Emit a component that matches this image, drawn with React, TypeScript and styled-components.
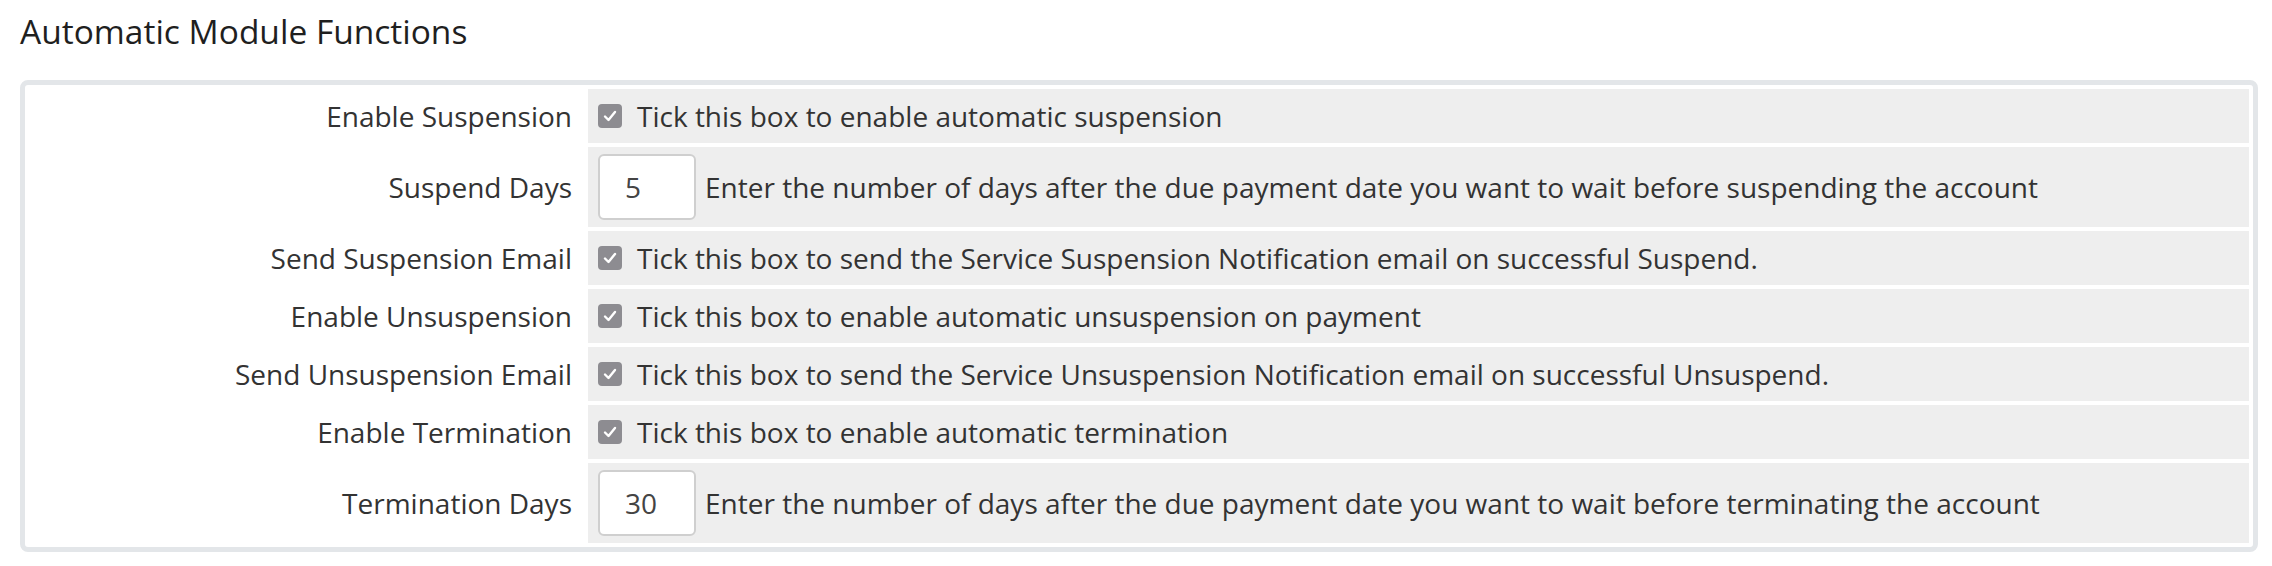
import React from 'react';
import styled, { createGlobalStyle } from 'styled-components';

const GlobalStyle = createGlobalStyle`
  html, body {
    margin: 0;
    padding: 0;
    background: #ffffff;
    font-family: "Open Sans", "Liberation Sans", Arial, sans-serif;
  }
`

const Page = styled.div`
  padding: 0 14px 0 20px;
`

const Title = styled.h2`
  margin: 0;
  padding: 8px 0 0 0;
  height: 80px;
  box-sizing: border-box;
  font-size: 33.5px;
  font-weight: 400;
  line-height: 46px;
  color: #1f1f1f;
`

const Panel = styled.div`
  border: 5px solid #e3e6e9;
  border-radius: 8px;
  padding: 4px;
  display: grid;
  grid-template-columns: 25% 1fr;
  row-gap: 4.5px;
  column-gap: 4px;
`

const Label = styled.div`
  display: flex;
  align-items: center;
  justify-content: flex-end;
  padding-right: 12px;
  font-size: 28px;
  color: #333333;
  white-space: nowrap;
`

const Field = styled.div<{ $tall?: boolean }>`
  display: flex;
  align-items: center;
  background: #eeeeee;
  height: ${p => (p.$tall ? '79.5px' : '53.5px')};
  padding-left: 10px;
  font-size: 28px;
  color: #333333;
  white-space: nowrap;
`

const Check = styled.span`
  display: inline-flex;
  align-items: center;
  justify-content: center;
  width: 24px;
  height: 24px;
  border-radius: 4px;
  background: #8d8c91;
  margin: 1px 15px 0 0;
  flex-shrink: 0;
`

const NumberInput = styled.input`
  width: 98px;
  height: 66px;
  box-sizing: border-box;
  border: 2px solid #cfcfcf;
  border-radius: 6px;
  background: #ffffff;
  padding: 0 0 0 25px;
  margin: 0 9px 0 0;
  font-family: inherit;
  font-size: 28px;
  color: #444444;
  outline: none;
`

type Row = {
  label: string
  text: string
  value?: string
}

const rows: Row[] = [
  { label: 'Enable Suspension', text: 'Tick this box to enable automatic suspension' },
  { label: 'Suspend Days', value: '5', text: 'Enter the number of days after the due payment date you want to wait before suspending the account' },
  { label: 'Send Suspension Email', text: 'Tick this box to send the Service Suspension Notification email on successful Suspend.' },
  { label: 'Enable Unsuspension', text: 'Tick this box to enable automatic unsuspension on payment' },
  { label: 'Send Unsuspension Email', text: 'Tick this box to send the Service Unsuspension Notification email on successful Unsuspend.' },
  { label: 'Enable Termination', text: 'Tick this box to enable automatic termination' },
  { label: 'Termination Days', value: '30', text: 'Enter the number of days after the due payment date you want to wait before terminating the account' },
]

const CheckMark = () => (
  <Check>
    <svg width="14" height="12" viewBox="0 0 14 12">
      <path d="M2 6.5 L5.5 10 L12 2" fill="none" stroke="#ffffff" strokeWidth="2.4" strokeLinecap="round" strokeLinejoin="round" />
    </svg>
  </Check>
)

export default function App() {
  return (
    <Page>
      <GlobalStyle />
      <Title>Automatic Module Functions</Title>
      <Panel>
        {rows.map(row => (
          <React.Fragment key={row.label}>
            <Label>{row.label}</Label>
            <Field $tall={row.value !== undefined}>
              {row.value !== undefined
                ? <NumberInput type="text" defaultValue={row.value} />
                : <CheckMark />}
              {row.text}
            </Field>
          </React.Fragment>
        ))}
      </Panel>
    </Page>
  )
}
